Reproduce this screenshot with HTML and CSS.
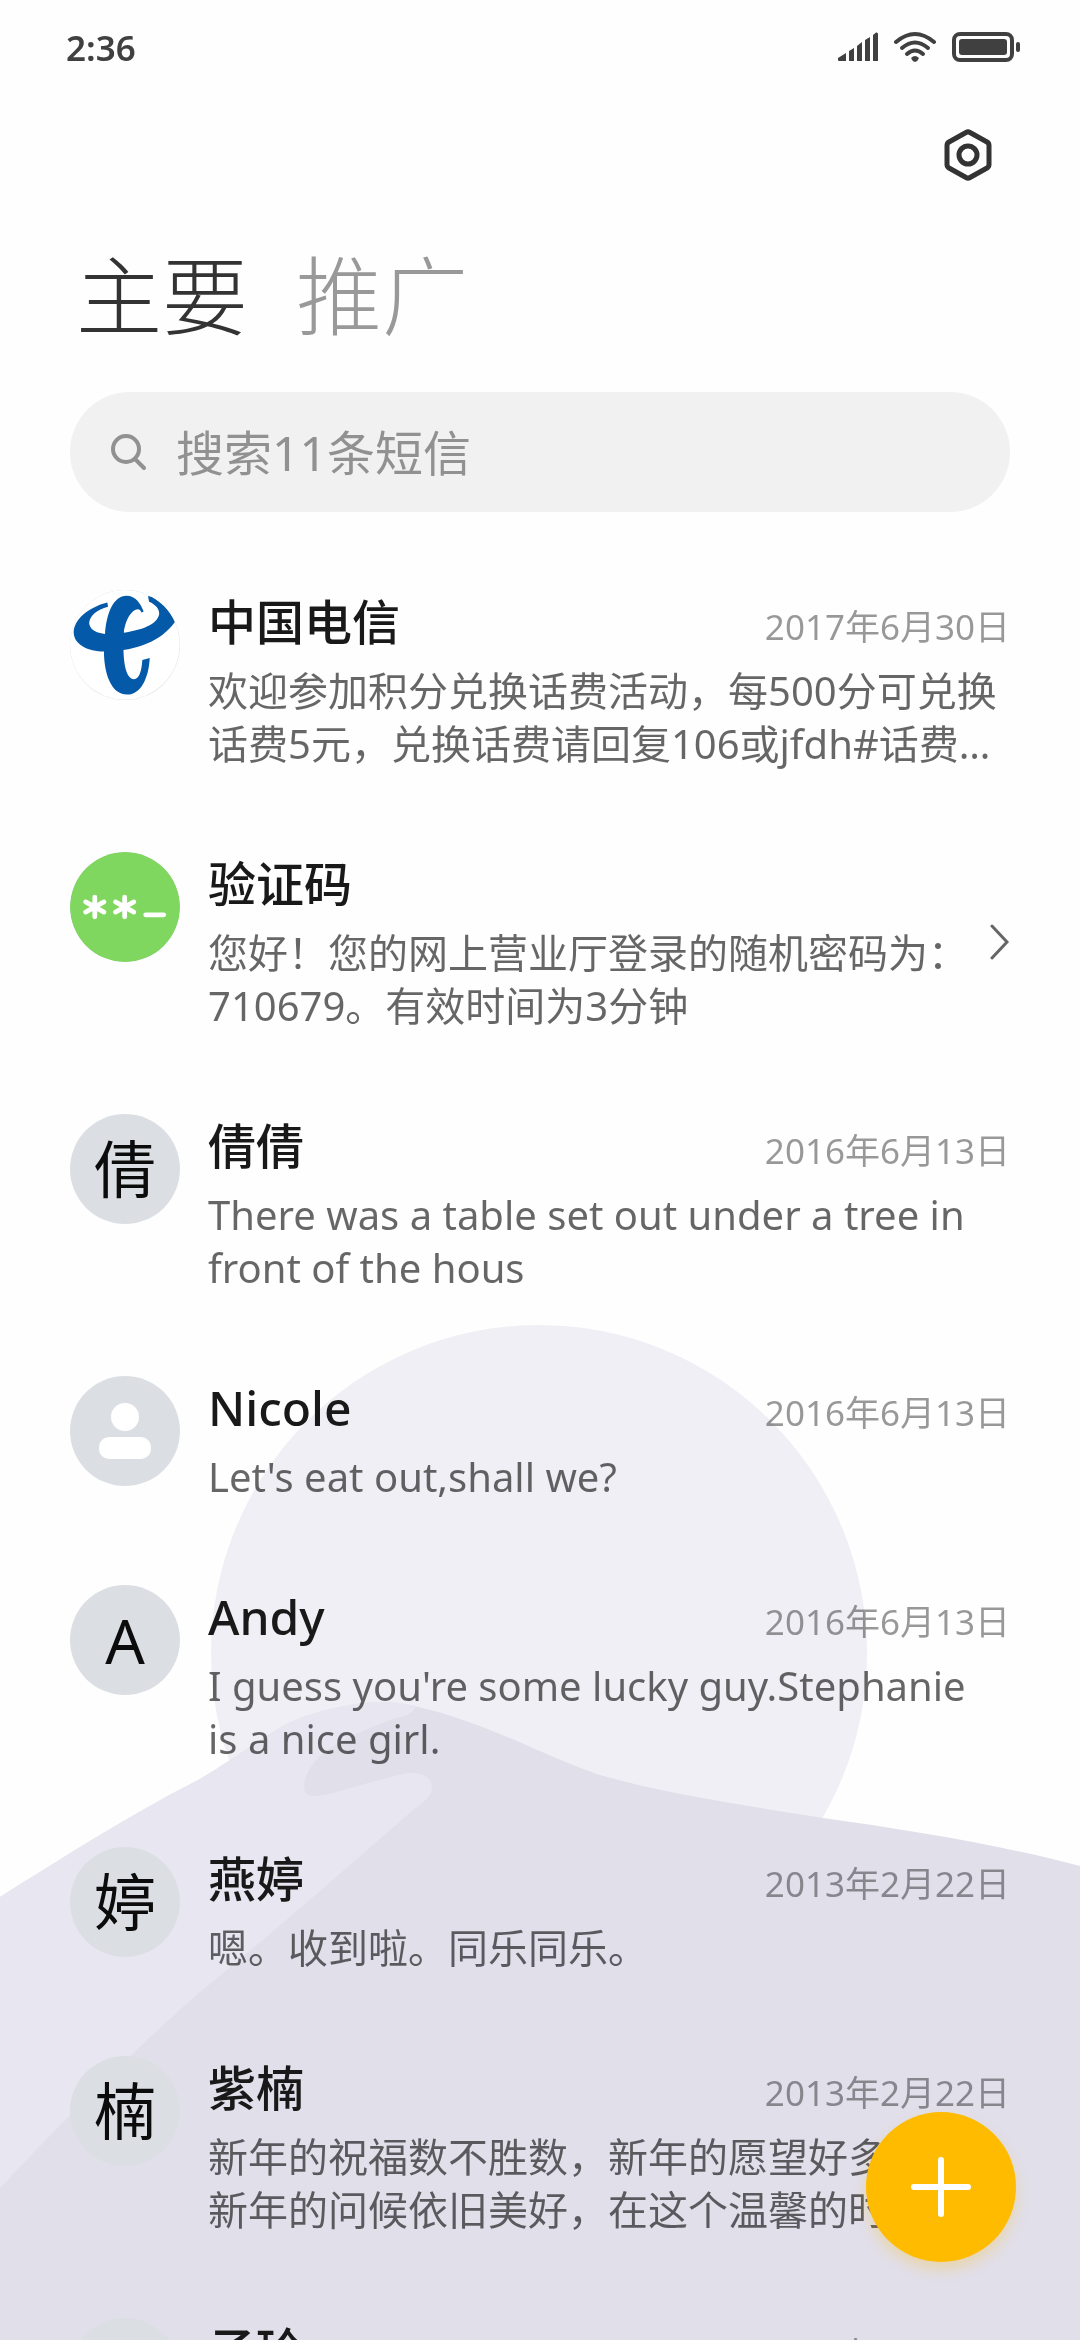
FILE: index.html
```
<!DOCTYPE html>
<html lang="zh-CN">
<head>
    <meta charset="UTF-8">
    <meta name="viewport" content="width=device-width, initial-scale=1.0">
    <title>短信</title>
    <link rel="stylesheet" href="styles.css">
</head>
<body>
    <svg class="wallpaper" viewBox="0 1300 1080 1040" aria-hidden="true">
        <circle cx="539" cy="1653" r="328" fill="#f0eff5"/>
        <path fill="#e1dfea" d="M0 1897 C70 1853 135 1812 200 1779 C240 1756 270 1730 300 1718 C335 1706 365 1700 400 1703 C480 1718 540 1755 600 1775 C670 1795 750 1806 823 1818 C910 1830 1000 1845 1080 1866 V2340 H0 Z"/>
        <path fill="#e8e7f1" d="M0 1897 C70 1853 135 1812 200 1779 C240 1756 270 1730 300 1718 C335 1706 365 1700 400 1703 L416 1706 C414 1712 408 1715 400 1717 C370 1726 345 1739 327 1750 C312 1761 301 1779 305 1792 C308 1799 325 1796 350 1788 L398 1775 C417 1770 432 1775 432 1788 C431 1797 423 1803 413 1810 C340 1874 270 1935 200 1992 C150 2035 65 2118 0 2188 Z"/>
    </svg>

    <div class="status-bar">
        <span class="clock">2:36</span>
        <svg class="status-icons" viewBox="838 30 184 34" aria-hidden="true">
            <path d="M838 58 L846 53 V61 H839 Q838 61 838 60 Z M849 51 L854 48 V61 H849 Z M857 46 L862 42 V61 H857 Z M865 40 L870 37 V61 H865 Z M873 35 L876 32.500 Q878 32 878 34 V61 H873 Z"/>
            <g class="wifi">
                <path d="M896 42 Q915 26 934 42"/>
                <path d="M902 48 Q915 37 928 48"/>
                <path d="M907 54 Q915 47 923 54"/>
            </g>
            <path d="M911 58 Q915 54 919 58 Q918 61 915 62 Q912 61 911 58 Z"/>
            <rect class="battery" x="954" y="34" width="58" height="26" rx="6"/>
            <rect x="959" y="39" width="48" height="16" rx="3"/>
            <rect x="1016" y="42" width="4" height="10" rx="2"/>
        </svg>
    </div>

    <div class="toolbar">
        <button type="button" class="settings" aria-label="设置">
            <svg viewBox="0 0 50 54">
                <path d="M23 4.500 Q25 3.300 27 4.500 L44 14 Q46 15.200 46 17.500 V36.500 Q46 38.800 44 40 L27 49.500 Q25 50.700 23 49.500 L6 40 Q4 38.800 4 36.500 V17.500 Q4 15.200 6 14 Z"/>
                <circle cx="25" cy="27" r="9"/>
            </svg>
        </button>
    </div>

    <div class="tabs">
        <button type="button" class="tab active">主要</button>
        <button type="button" class="tab">推广</button>
    </div>

    <label class="search">
        <svg viewBox="0 0 38 40" aria-hidden="true">
            <circle cx="16" cy="17" r="13"/>
            <path d="M26 28 L34 36"/>
        </svg>
        <input type="search" placeholder="搜索11条短信" aria-label="搜索短信">
    </label>

    <ul class="threads">
        <li>
            <a class="thread" href="#">
                <svg class="avatar" viewBox="30 27 327 327" aria-hidden="true">
                    <circle cx="193" cy="190" r="163" fill="#fff"/>
                    <g fill="#0459a8">
                        <path d="M141 64 C85 78 40 115 41 155 C43 190 85 212 140 210 C230 206 300 180 342 122 C325 85 295 50 262 45 L265 62 C285 70 297 85 295 100 C288 130 245 146 190 154 C165 159 145 160 130 157 C100 153 88 140 87 125 C88 105 110 85 143 77 Z"/>
                        <path d="M249 91 C240 68 226 44 198 44 C160 44 138 95 134 160 L131 210 C131 270 150 338 200 338 C240 338 264 290 267 229 L245 235 C243 265 237 292 220 292 C198 290 190 250 189 205 L190 154 C194 118 212 85 232 84 C240 85 242 93 243 94 Z"/>
                    </g>
                </svg>
                <div class="content">
                    <div class="title-row">
                        <span class="name">中国电信</span>
                        <time class="date">2017年6月30日</time>
                    </div>
                    <p class="preview">欢迎参加积分兑换话费活动，每500分可兑换<br>话费5元，兑换话费请回复106或jfdh#话费…</p>
                </div>
            </a>
        </li>
        <li>
            <a class="thread" href="#">
                <svg class="avatar" viewBox="33 36 324 324" aria-hidden="true">
                    <circle cx="195" cy="198" r="162" fill="#80d75f"/>
                    <g class="code-mark">
                        <path d="M106 169 V227 M79 183 L133 213 M133 183 L79 213"/>
                        <path d="M194 169 V227 M167 183 L221 213 M221 183 L167 213"/>
                        <path d="M256 221 H309"/>
                    </g>
                </svg>
                <div class="content">
                    <div class="title-row">
                        <span class="name">验证码</span>
                    </div>
                    <p class="preview">您好！您的网上营业厅登录的随机密码为：<br>710679。有效时间为3分钟</p>
                </div>
                <svg class="chevron" viewBox="0 0 20 36" aria-hidden="true">
                    <path d="M2 2 L17 18 L2 34"/>
                </svg>
            </a>
        </li>
        <li>
            <a class="thread" href="#">
                <span class="avatar">倩</span>
                <div class="content">
                    <div class="title-row">
                        <span class="name">倩倩</span>
                        <time class="date">2016年6月13日</time>
                    </div>
                    <p class="preview">There was a table set out under a tree in<br>front of the hous</p>
                </div>
            </a>
        </li>
        <li>
            <a class="thread" href="#">
                <svg class="avatar" viewBox="0 0 110 110" aria-hidden="true">
                    <circle cx="55" cy="41" r="14" fill="#fff"/>
                    <rect x="29" y="61" width="52" height="22" rx="10" fill="#fff"/>
                </svg>
                <div class="content">
                    <div class="title-row">
                        <span class="name">Nicole</span>
                        <time class="date">2016年6月13日</time>
                    </div>
                    <p class="preview">Let's eat out,shall we?</p>
                </div>
            </a>
        </li>
        <li>
            <a class="thread" href="#">
                <span class="avatar">A</span>
                <div class="content">
                    <div class="title-row">
                        <span class="name">Andy</span>
                        <time class="date">2016年6月13日</time>
                    </div>
                    <p class="preview">I guess you're some lucky guy.Stephanie<br>is a nice girl.</p>
                </div>
            </a>
        </li>
        <li>
            <a class="thread" href="#">
                <span class="avatar">婷</span>
                <div class="content">
                    <div class="title-row">
                        <span class="name">燕婷</span>
                        <time class="date">2013年2月22日</time>
                    </div>
                    <p class="preview">嗯。收到啦。同乐同乐。</p>
                </div>
            </a>
        </li>
        <li>
            <a class="thread" href="#">
                <span class="avatar">楠</span>
                <div class="content">
                    <div class="title-row">
                        <span class="name">紫楠</span>
                        <time class="date">2013年2月22日</time>
                    </div>
                    <p class="preview">新年的祝福数不胜数，新年的愿望好多<br>新年的问候依旧美好，在这个温馨的时</p>
                </div>
            </a>
        </li>
        <li>
            <a class="thread" href="#">
                <span class="avatar">玲</span>
                <div class="content">
                    <div class="title-row">
                        <span class="name">子玲</span>
                        <time class="date">2013年2月22日</time>
                    </div>
                </div>
            </a>
        </li>
    </ul>

    <button type="button" class="compose" aria-label="新建短信">
        <svg viewBox="0 0 60 60">
            <path d="M30 3 V57 M3 30 H57"/>
        </svg>
    </button>
</body>
</html>
```
FILE: styles.css
```
* {
    box-sizing: border-box;
}
body {
    font-family: "Noto Sans", "Noto Sans CJK SC", sans-serif;
    background-color: #fefefe;
    color: #191919;
    margin: 0;
    height: 100vh;
    overflow: hidden;
}
button, input {
    font-family: inherit;
    border: none;
    background: none;
    padding: 0;
    margin: 0;
}
button {
    cursor: pointer;
}
svg {
    display: block;
    flex-shrink: 0;
}
.wallpaper {
    position: fixed;
    left: 0;
    bottom: 0;
    width: 100%;
    z-index: -1;
}

/* status bar */
.status-bar {
    display: flex;
    align-items: center;
    justify-content: space-between;
    height: 94px;
    padding: 0 58px 0 66px;
    color: #404040;
}
.clock {
    font-size: 35px;
    font-weight: 600;
}
.status-icons {
    width: 184px;
    height: 34px;
    fill: #404040;
}
.wifi path, .battery {
    fill: none;
    stroke: #404040;
    stroke-width: 4;
    stroke-linecap: round;
}

/* header */
.toolbar {
    display: flex;
    justify-content: flex-end;
    align-items: center;
    height: 122px;
    padding: 0 87px;
}
.settings svg {
    width: 50px;
    height: 54px;
    fill: none;
    stroke: #333;
    stroke-width: 5;
}
.tabs {
    display: flex;
    gap: 48px;
    padding: 20px 76px 36px;
}
.tab {
    font-size: 86px;
    font-weight: 300;
    line-height: 120px;
    color: #999;
}
.tab.active {
    color: #333;
}

/* search */
.search {
    display: flex;
    align-items: center;
    gap: 28px;
    height: 120px;
    margin: 0 70px 38px;
    padding: 0 40px;
    border-radius: 60px;
    background-color: #f1f1f1;
}
.search svg {
    width: 38px;
    height: 40px;
    fill: none;
    stroke: #919191;
    stroke-width: 4;
    stroke-linecap: round;
}
.search input {
    flex: 1;
    min-width: 0;
    height: 100%;
    font-size: 48px;
    outline: none;
}
.search input::placeholder {
    color: #919191;
}

/* message threads */
.threads {
    list-style: none;
    margin: 0;
    padding: 0;
}
.thread {
    display: flex;
    align-items: flex-start;
    padding: 40px 70px 42px;
    color: inherit;
    text-decoration: none;
}
.avatar {
    display: flex;
    align-items: center;
    justify-content: center;
    flex-shrink: 0;
    width: 110px;
    height: 110px;
    margin-right: 28px;
    border-radius: 50%;
    background-color: #dbdfe4;
    color: #0c0c0c;
    font-size: 62px;
    line-height: 1;
}
.code-mark {
    fill: none;
    stroke: #fff;
    stroke-width: 14;
    stroke-linecap: round;
}
.content {
    flex: 1;
    min-width: 0;
}
.title-row {
    display: flex;
    justify-content: space-between;
    align-items: baseline;
    height: 64px;
    margin-bottom: 10px;
    line-height: 64px;
}
.name {
    font-size: 48px;
    font-weight: 500;
}
.date {
    font-size: 35px;
    color: #000;
    opacity: 0.4;
}
.preview {
    margin: 0;
    font-size: 40px;
    line-height: 53px;
    color: rgba(0, 0, 0, 0.6);
    white-space: nowrap;
}
.chevron {
    align-self: center;
    width: 20px;
    height: 36px;
    fill: none;
    stroke: #666;
    stroke-width: 3;
    stroke-linecap: round;
}

/* new message button */
.compose {
    position: fixed;
    right: 64px;
    bottom: 78px;
    display: flex;
    align-items: center;
    justify-content: center;
    width: 150px;
    height: 150px;
    border-radius: 50%;
    background-color: #fb0;
    box-shadow: 0 8px 14px rgba(255, 187, 0, 0.25);
}
.compose svg {
    width: 60px;
    height: 60px;
    fill: none;
    stroke: #fff;
    stroke-width: 6;
    stroke-linecap: round;
}
```
